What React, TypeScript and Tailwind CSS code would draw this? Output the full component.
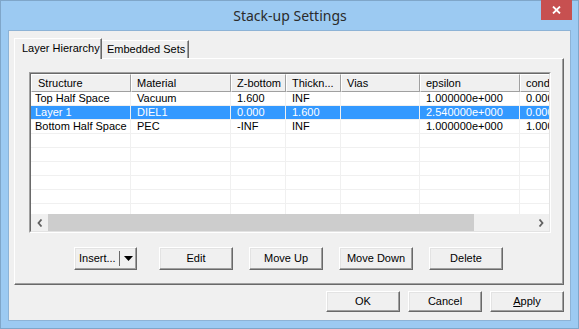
import React from 'react';

const columns = [
  { name: 'Structure', w: 'w-[100px]' },
  { name: 'Material', w: 'w-[100px]' },
  { name: 'Z-bottom', w: 'w-[55px]' },
  { name: 'Thickn...', w: 'w-[55px]' },
  { name: 'Vias', w: 'w-[79px]' },
  { name: 'epsilon', w: 'w-[100px]' },
  { name: 'conductivity', w: 'w-[80px]' },
];

const rows = [
  ['Top Half Space', 'Vacuum', '1.600', 'INF', '', '1.000000e+000', '0.000000e+000'],
  ['Layer 1', 'DIEL1', '0.000', '1.600', '', '2.540000e+000', '0.000000e+000'],
  ['Bottom Half Space', 'PEC', '-INF', 'INF', '', '1.000000e+000', '1.000000e+000'],
  ['', '', '', '', '', '', ''],
  ['', '', '', '', '', '', ''],
  ['', '', '', '', '', '', ''],
  ['', '', '', '', '', '', ''],
  ['', '', '', '', '', '', ''],
  ['', '', '', '', '', '', ''],
];

const btn =
  'h-full bg-[#f0f0f0] border border-t-white border-l-white border-r-[#696969] border-b-[#696969] shadow-[inset_-1px_-1px_#a0a0a0,inset_1px_1px_#e3e3e3] flex items-center justify-center text-black';

const Button: React.FC<{ w: string; children: React.ReactNode }> = ({ w, children }) => (
  <div className={`${btn} ${w}`}>{children}</div>
);

export default function App() {
  return (
    <div className="w-[579px] h-[329px] bg-[#9ccaf2] border border-[#7fa6c9] flex flex-col font-['Liberation_Sans',Arial,sans-serif] text-[11px] text-black select-none">
      {/* Title bar */}
      <div className="h-[29px] flex items-start shrink-0">
        <div className="flex-1 pl-[38px] h-[29px] flex items-center justify-center font-['Noto_Sans',sans-serif] text-[14px] text-[#2b2b2b]">
          Stack-up Settings
        </div>
        <div className="w-[31px] h-[20px] mr-[6px] -mt-px bg-[#c75050] flex items-center justify-center">
          <svg width="9" height="8" viewBox="0 0 9 8">
            <path d="M1 0.5 L8 7.5 M8 0.5 L1 7.5" stroke="white" strokeWidth="1.8" />
          </svg>
        </div>
      </div>

      {/* Client area */}
      <div className="mx-[7px] h-[291px] bg-[#f0f0f0] border border-[#8db3d6] flex flex-col pl-[5px] pr-[6px] pt-[7px]">
        {/* Tabs */}
        <div className="h-[20px] flex items-end shrink-0">
          <div className="relative z-10 h-[21px] -mb-px w-[88px] bg-[#f0f0f0] border-t border-l border-t-white border-l-white border-r border-r-[#696969] shadow-[inset_-1px_0_#a0a0a0] flex items-center pl-[7px] pb-[2px]">
            Layer Hierarchy
          </div>
          <div className="h-[18px] w-[87px] bg-[#f0f0f0] border-t border-t-white border-r border-r-[#696969] shadow-[inset_-1px_0_#a0a0a0] flex items-center pl-[5px]">
            Embedded Sets
          </div>
        </div>

        {/* Tab panel */}
        <div className="h-[227px] w-[550px] border border-t-white border-l-white border-r-[#696969] border-b-[#696969] shadow-[inset_-1px_-1px_#a0a0a0] flex flex-col pl-[14px] pt-[13px]">
          {/* List view */}
          <div className="w-[522px] h-[161px] border border-t-[#a0a0a0] border-l-[#a0a0a0] border-r-white border-b-white shrink-0">
            <div className="w-full h-full border border-t-[#696969] border-l-[#696969] border-r-[#e3e3e3] border-b-[#e3e3e3] bg-white flex flex-col overflow-hidden">
              {/* Header */}
              <div className="h-[18px] flex shrink-0 bg-[#f0f0f0]">
                {columns.map((c, i) => (
                  <div
                    key={c.name}
                    className={`${c.w} shrink-0 h-full border-t border-l border-t-white border-l-white border-r border-b border-r-[#a0a0a0] border-b-[#a0a0a0] flex items-center whitespace-nowrap overflow-hidden ${i === 0 ? 'pl-[6px]' : 'pl-[5px]'}`}
                  >
                    {c.name}
                  </div>
                ))}
              </div>
              {/* Rows */}
              <div className="flex-1 overflow-hidden">
                {rows.map((r, ri) => (
                  <div
                    key={ri}
                    className={`h-[14px] flex ${ri === 1 ? 'bg-[#3399ff] text-white' : ''}`}
                  >
                    {r.map((cell, ci) => (
                      <div
                        key={ci}
                        className={`${columns[ci].w} shrink-0 h-full border-r border-b border-[#f0f0f0] flex items-center whitespace-nowrap overflow-hidden ${ci === 0 ? 'pl-[4px]' : 'pl-[6px]'}`}
                      >
                        {cell}
                      </div>
                    ))}
                  </div>
                ))}
              </div>
              {/* Horizontal scrollbar */}
              <div className="h-[17px] flex shrink-0 bg-[#f0f0f0]">
                <div className="w-[17px] flex items-center justify-center">
                  <svg width="6" height="8" viewBox="0 0 6 8">
                    <path d="M4.5 0.5 L1.5 4 L4.5 7.5" stroke="#606060" strokeWidth="1.8" fill="none" />
                  </svg>
                </div>
                <div className="w-[426px] bg-[#cdcdcd]" />
                <div className="flex-1" />
                <div className="w-[17px] flex items-center justify-center">
                  <svg width="6" height="8" viewBox="0 0 6 8">
                    <path d="M1.5 0.5 L4.5 4 L1.5 7.5" stroke="#606060" strokeWidth="1.8" fill="none" />
                  </svg>
                </div>
              </div>
            </div>
          </div>

          {/* Action buttons */}
          <div className="h-[23px] mt-[14px] flex pl-[45px]">
            <div className={`${btn} w-[63px] justify-start`}>
              <span className="pl-[4px]">Insert...</span>
              <span className="ml-[3px] w-px h-[15px] bg-[#696969]" />
              <svg className="ml-[4px]" width="9" height="5" viewBox="0 0 9 5">
                <path d="M0 0 H9 L4.5 5 Z" fill="black" />
              </svg>
            </div>
            <div className="w-[22px]" />
            <Button w="w-[74px]">Edit</Button>
            <div className="w-[16px]" />
            <Button w="w-[74px]">Move Up</Button>
            <div className="w-[16px]" />
            <Button w="w-[74px]">Move Down</Button>
            <div className="w-[16px]" />
            <Button w="w-[74px]">Delete</Button>
          </div>
        </div>

        {/* Dialog buttons */}
        <div className="h-[21px] mt-[6px] w-[550px] flex justify-end gap-[8px]">
          <Button w="w-[74px]">OK</Button>
          <Button w="w-[74px]">Cancel</Button>
          <Button w="w-[74px]">
            <span>
              <span className="underline">A</span>pply
            </span>
          </Button>
        </div>
      </div>
    </div>
  );
}
